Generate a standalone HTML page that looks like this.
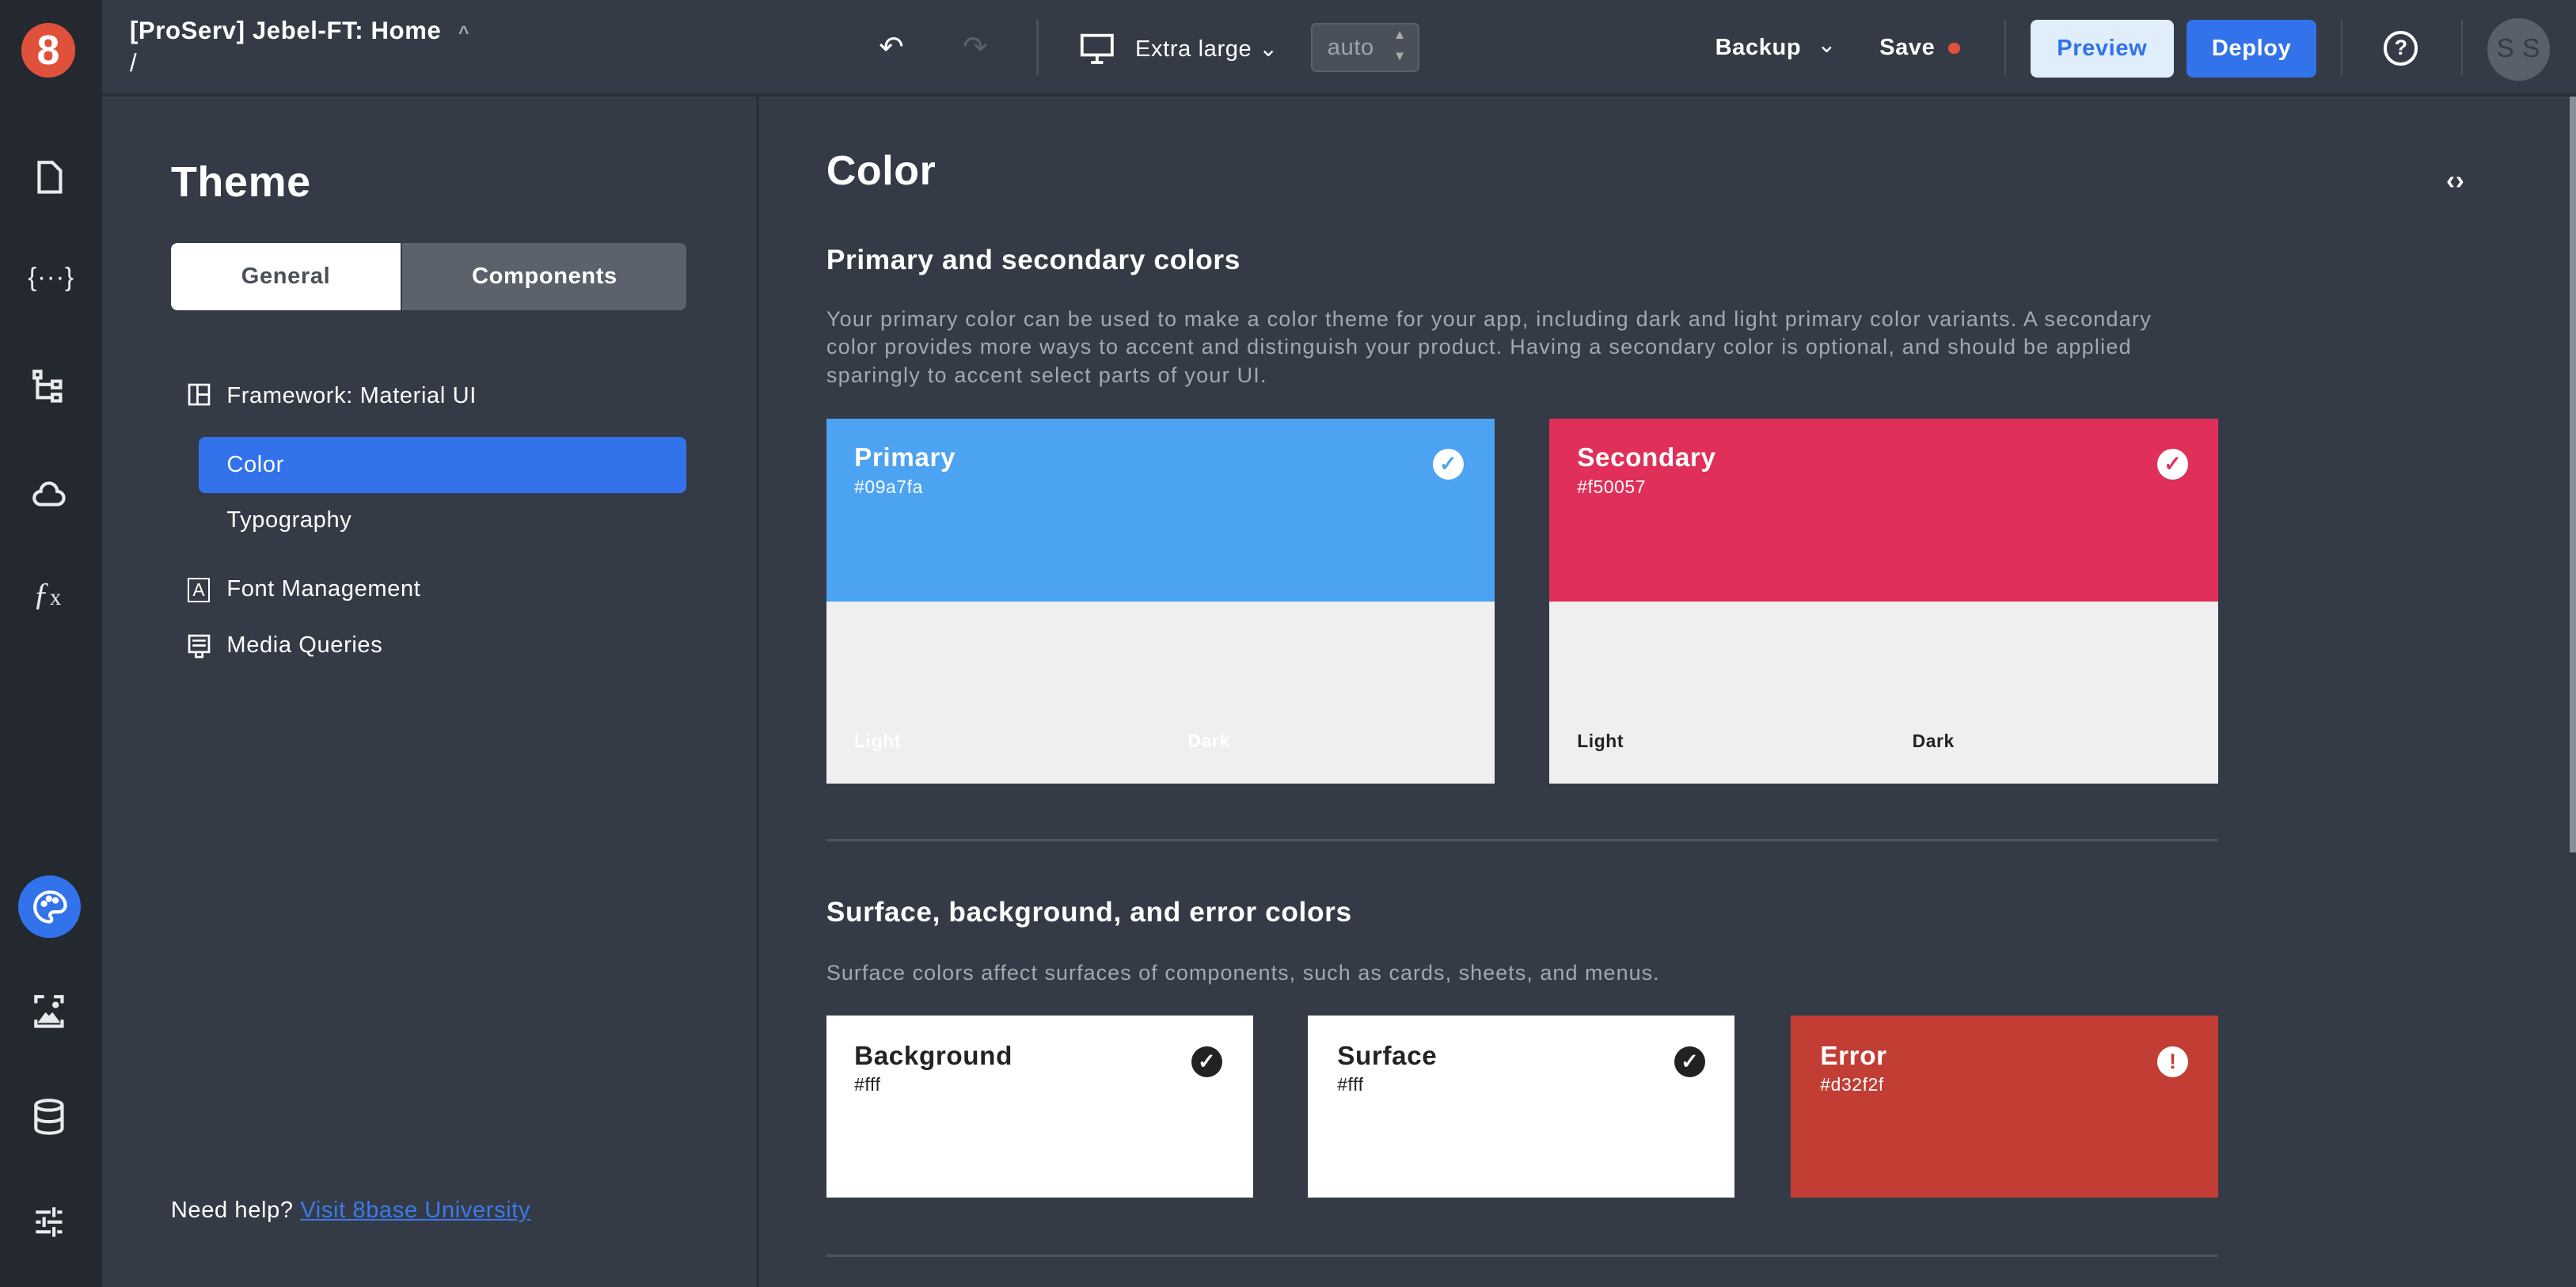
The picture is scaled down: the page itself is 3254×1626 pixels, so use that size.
<!DOCTYPE html>
<html><head><meta charset="utf-8"><style>
html,body{margin:0;padding:0;width:3254px;height:1626px;overflow:hidden;background:#353b46}
#r{zoom:2.07526;width:1568px;height:784px;position:relative;font-family:"Liberation Sans",sans-serif;color:#fff;background:#353b46;letter-spacing:0.3px}
.a{position:absolute}
.sb{left:0;top:0;width:62px;height:784px;background:#24282f}
.ic{position:absolute;left:18px;width:24px;height:24px}
.top{left:62px;top:0;width:1506px;height:57px;background:#353b46;border-bottom:2px solid #2a2f37}
.panel{left:62px;top:59px;width:398px;height:725px;background:#353b46;border-right:2px solid #2b3038}
.t{font-size:14px}
.b{font-weight:bold}
.card{position:absolute}
.sep{position:absolute;height:1px;background:#4f5560}
</style></head><body><div id="r">
<div class="a sb"></div>
<div class="a" style="left:13px;top:14px;width:33px;height:33px;border-radius:50%;background:#e0513c;font-weight:bold;font-size:25px;text-align:center;line-height:33px">8</div>
<svg class="ic" style="top:96px" viewBox="0 0 24 24" fill="none" stroke="#e8eaee" stroke-width="2"><path d="M6 3h8l5 5v13H6z"/></svg>
<div class="a" style="left:17px;top:160px;font-size:16px;color:#e8eaee">{···}</div>
<svg class="ic" style="top:224px" viewBox="0 0 24 24" fill="none" stroke="#e8eaee" stroke-width="2"><rect x="3" y="2" width="4" height="4"/><rect x="14" y="8" width="5" height="4"/><rect x="14" y="16" width="5" height="4"/><path d="M5 6v12h9M5 10h9"/></svg>
<svg class="ic" style="top:288px" viewBox="0 0 24 24" fill="none" stroke="#e8eaee" stroke-width="2"><path d="M7 19h10a4 4 0 0 0 0-8 5 5 0 0 0-10 0 4 4 0 0 0 0 8z"/></svg>
<div class="a" style="left:20px;top:350px;font-size:20px;font-style:italic;color:#e8eaee;font-family:'Liberation Serif',serif">ƒ<span style="font-size:14px;font-style:normal">x</span></div>
<div class="a" style="left:11px;top:533px;width:38px;height:38px;border-radius:50%;background:#3273eb"></div>
<svg class="ic" style="top:540px;left:19px" viewBox="0 0 24 24" fill="none" stroke="#fff" stroke-width="2"><path d="M12 3a9 9 0 0 0-1 18c2 0 2-2 1-3s0-3 2-3h3a4 4 0 0 0 4-4c0-4-4-8-9-8z"/><circle cx="8" cy="10" r="1" fill="#fff"/><circle cx="11" cy="7" r="1" fill="#fff"/><circle cx="15" cy="8" r="1" fill="#fff"/></svg>
<svg class="ic" style="top:604px" viewBox="0 0 24 24" fill="none" stroke="#e8eaee" stroke-width="2"><path d="M4 7V3h5M15 3h5v4M4 17v4h16v-4"/><path d="M7 18l3-4 2 2 2-2 3 4z" fill="#e8eaee"/><circle cx="16" cy="8" r="1" fill="#e8eaee"/></svg>
<svg class="ic" style="top:668px" viewBox="0 0 24 24" fill="none" stroke="#e8eaee" stroke-width="2"><ellipse cx="12" cy="5" rx="8" ry="3"/><path d="M4 5v14c0 2 4 3 8 3s8-1 8-3V5M4 12c0 2 4 3 8 3s8-1 8-3"/></svg>
<svg class="ic" style="top:732px" viewBox="0 0 24 24" fill="none" stroke="#e8eaee" stroke-width="2"><path d="M4 6h9M17 6h3M15 3v6M4 12h3M11 12h9M9 9v6M4 18h9M17 18h3M15 15v6"/></svg>

<div class="a top"></div>
<div class="a b" style="left:79px;top:10px;font-size:15px">[ProServ] Jebel-FT: Home <span style="font-size:11px;color:#aaa;margin-left:6px">^</span></div>
<div class="a" style="left:79px;top:30px;font-size:15px">/</div>
<div class="a" style="left:535px;top:18px;font-size:18px">↶</div>
<div class="a" style="left:586px;top:18px;font-size:18px;color:#5a606b">↷</div>
<div class="a" style="left:631px;top:12px;width:1px;height:34px;background:#4a505a"></div>
<svg class="a" style="left:657px;top:19px" width="22" height="22" viewBox="0 0 24 24" fill="none" stroke="#fff" stroke-width="2"><rect x="2" y="3" width="20" height="13"/><path d="M12 16v4M8 21h8"/></svg>
<div class="a t" style="left:691px;top:21px">Extra large ⌄</div>
<div class="a" style="left:798px;top:14px;width:66px;height:30px;background:#4a505a;border:1px solid #5b616b;border-radius:3px;box-sizing:border-box"></div>
<div class="a t" style="left:808px;top:21px;color:#9ea3ab">auto</div>
<div class="a" style="left:848px;top:15px;font-size:8px;color:#aaa;line-height:13px">▲<br>▼</div>
<div class="a t b" style="left:1044px;top:21px">Backup</div>
<div class="a t" style="left:1106px;top:19px">⌄</div>
<div class="a t b" style="left:1144px;top:21px">Save</div>
<div class="a" style="left:1186px;top:26px;width:7px;height:7px;border-radius:50%;background:#e0513c"></div>
<div class="a" style="left:1220px;top:12px;width:1px;height:34px;background:#4a505a"></div>
<div class="a t b" style="left:1236px;top:12px;width:87px;height:35px;border-radius:4px;background:#e0edfb;color:#3273eb;text-align:center;line-height:35px">Preview</div>
<div class="a t b" style="left:1331px;top:12px;width:79px;height:35px;border-radius:4px;background:#3273eb;text-align:center;line-height:35px">Deploy</div>
<div class="a" style="left:1425px;top:12px;width:1px;height:34px;background:#4a505a"></div>
<div class="a" style="left:1451px;top:19px;width:17px;height:17px;border:2px solid #fff;border-radius:50%;text-align:center;font-size:13px;font-weight:bold;line-height:17px;letter-spacing:0">?</div>
<div class="a" style="left:1498px;top:12px;width:1px;height:34px;background:#4a505a"></div>
<div class="a" style="left:1514px;top:11px;width:38px;height:38px;border-radius:50%;background:#5a606b;color:#353b46;text-align:center;line-height:38px;font-size:16px">S S</div>
<div class="a" style="left:1564px;top:59px;width:4px;height:460px;background:#8a8f96"></div>

<div class="a panel"></div>
<div class="a b" style="left:104px;top:96px;font-size:26px">Theme</div>
<div class="a t b" style="left:104px;top:148px;width:140px;height:41px;background:#fff;color:#4a505a;border-radius:4px 0 0 4px;text-align:center;line-height:41px">General</div>
<div class="a t b" style="left:245px;top:148px;width:173px;height:41px;background:#5c626c;border-radius:0 4px 4px 0;text-align:center;line-height:41px">Components</div>
<svg class="a" style="left:114px;top:233px" width="14" height="14" viewBox="0 0 14 14" fill="none" stroke="#fff" stroke-width="1.3"><rect x="1" y="1" width="12" height="12"/><path d="M6 1v12M6 7h7"/></svg>
<div class="a t" style="left:138px;top:233px">Framework: Material UI</div>
<div class="a" style="left:121px;top:266px;width:297px;height:34px;background:#3273eb;border-radius:4px"></div>
<div class="a t" style="left:138px;top:275px">Color</div>
<div class="a t" style="left:138px;top:309px">Typography</div>
<div class="a" style="left:114px;top:352px;width:12px;height:13px;border:1.3px solid #fff;font-size:11px;text-align:center;line-height:13px;letter-spacing:0">A</div>
<div class="a t" style="left:138px;top:351px">Font Management</div>
<svg class="a" style="left:114px;top:386px" width="14" height="15" viewBox="0 0 14 15" fill="none" stroke="#fff" stroke-width="1.3"><rect x="1" y="1" width="12" height="10"/><path d="M3 4h8M3 7h8M5 11v3h4v-3"/></svg>
<div class="a t" style="left:138px;top:385px">Media Queries</div>
<div class="a t" style="left:104px;top:729px">Need help? <span style="color:#3a7bea;text-decoration:underline">Visit 8base University</span></div>

<div class="a b" style="left:503px;top:89px;font-size:25px">Color</div>
<div class="a b" style="left:1489px;top:101px;font-size:16px">‹›</div>
<div class="a b" style="left:503px;top:149px;font-size:17px">Primary and secondary colors</div>
<div class="a" style="left:503px;top:186px;width:830px;font-size:13px;line-height:17px;color:#a3a8b0;letter-spacing:0.6px">Your primary color can be used to make a color theme for your app, including dark and light primary color variants. A secondary color provides more ways to accent and distinguish your product. Having a secondary color is optional, and should be applied sparingly to accent select parts of your UI.</div>

<div class="card" style="left:503px;top:255px;width:407px;height:111px;background:#4ba3f2"></div>
<div class="card" style="left:503px;top:366px;width:407px;height:111px;background:#efefef"></div>
<div class="a b" style="left:520px;top:270px;font-size:16px">Primary</div>
<div class="a" style="left:520px;top:290px;font-size:11px">#09a7fa</div>
<div class="a" style="left:872px;top:273px;width:19px;height:19px;border-radius:50%;background:#fff;color:#4ba3f2;font-size:13px;text-align:center;line-height:19px;font-weight:bold;letter-spacing:0">✓</div>
<div class="a b" style="left:520px;top:445px;font-size:11px;color:#fff">Light</div>
<div class="a b" style="left:723px;top:445px;font-size:11px;color:#fff">Dark</div>

<div class="card" style="left:943px;top:255px;width:407px;height:111px;background:#e0305a"></div>
<div class="card" style="left:943px;top:366px;width:407px;height:111px;background:#efefef"></div>
<div class="a b" style="left:960px;top:270px;font-size:16px">Secondary</div>
<div class="a" style="left:960px;top:290px;font-size:11px">#f50057</div>
<div class="a" style="left:1313px;top:273px;width:19px;height:19px;border-radius:50%;background:#fff;color:#e0305a;font-size:13px;text-align:center;line-height:19px;font-weight:bold;letter-spacing:0">✓</div>
<div class="a b" style="left:960px;top:445px;font-size:11px;color:#222">Light</div>
<div class="a b" style="left:1164px;top:445px;font-size:11px;color:#222">Dark</div>

<div class="sep" style="left:503px;top:511px;width:847px"></div>
<div class="a b" style="left:503px;top:546px;font-size:17px">Surface, background, and error colors</div>
<div class="a" style="left:503px;top:585px;font-size:13px;color:#a3a8b0;letter-spacing:0.5px">Surface colors affect surfaces of components, such as cards, sheets, and menus.</div>

<div class="card" style="left:503px;top:618px;width:260px;height:111px;background:#fff"></div>
<div class="a b" style="left:520px;top:634px;font-size:16px;color:#222">Background</div>
<div class="a" style="left:520px;top:654px;font-size:11px;color:#222">#fff</div>
<div class="a" style="left:725px;top:637px;width:19px;height:19px;border-radius:50%;background:#222;color:#fff;font-size:13px;text-align:center;line-height:19px;font-weight:bold;letter-spacing:0">✓</div>

<div class="card" style="left:796px;top:618px;width:260px;height:111px;background:#fff"></div>
<div class="a b" style="left:814px;top:634px;font-size:16px;color:#222">Surface</div>
<div class="a" style="left:814px;top:654px;font-size:11px;color:#222">#fff</div>
<div class="a" style="left:1019px;top:637px;width:19px;height:19px;border-radius:50%;background:#222;color:#fff;font-size:13px;text-align:center;line-height:19px;font-weight:bold;letter-spacing:0">✓</div>

<div class="card" style="left:1090px;top:618px;width:260px;height:111px;background:#c23e35"></div>
<div class="a b" style="left:1108px;top:634px;font-size:16px">Error</div>
<div class="a" style="left:1108px;top:654px;font-size:11px">#d32f2f</div>
<div class="a" style="left:1313px;top:637px;width:19px;height:19px;border-radius:50%;background:#fff;color:#c23e35;font-size:13px;text-align:center;line-height:19px;font-weight:bold;letter-spacing:0">!</div>

<div class="sep" style="left:503px;top:764px;width:847px"></div>
</div></body></html>
